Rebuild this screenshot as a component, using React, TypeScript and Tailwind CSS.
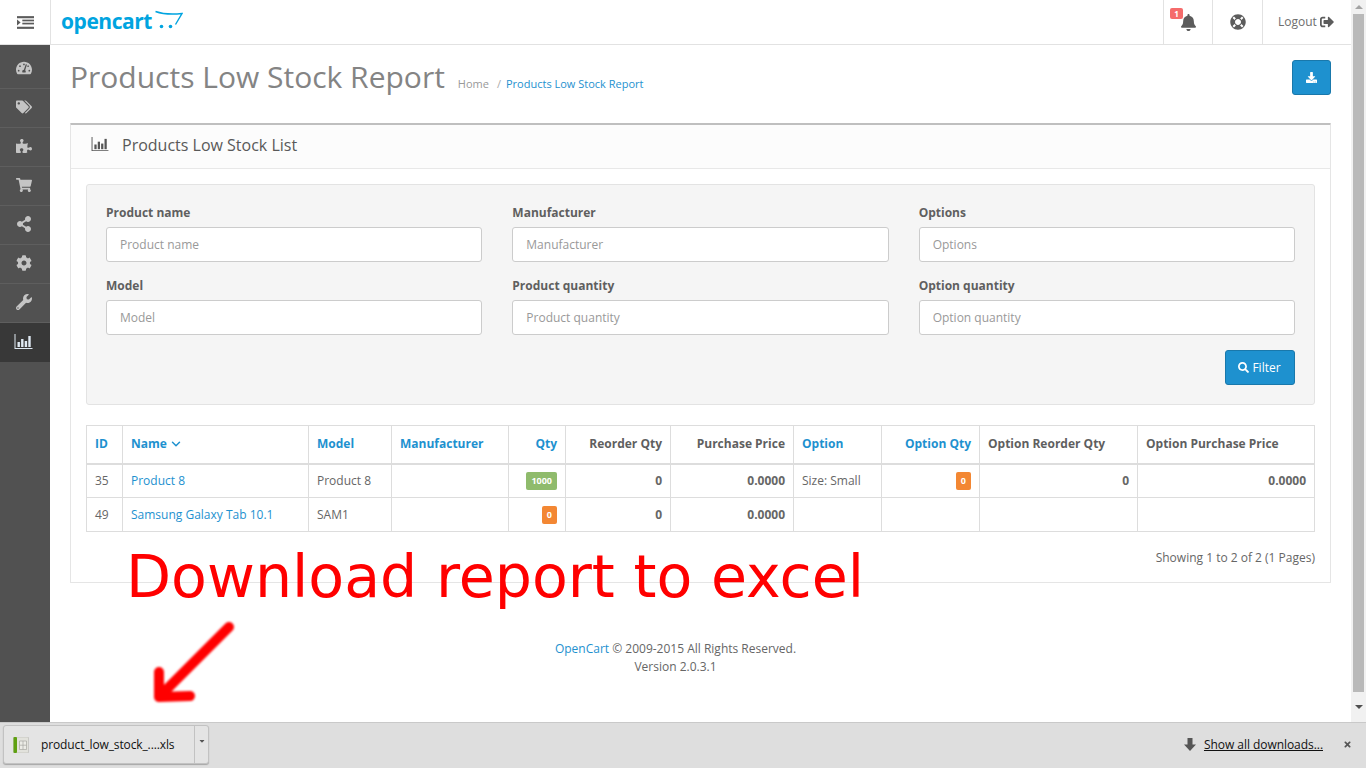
import { FaTachometerAlt, FaTags, FaPuzzlePiece, FaShoppingCart, FaShareAlt, FaCog, FaWrench, FaBell, FaLifeRing, FaSignOutAlt, FaDownload, FaSearch, FaTimes, FaCaretDown } from "react-icons/fa"
import { ChevronDown } from "lucide-react"

function ChartIcon({ className }: { className?: string }) {
    return (
        <svg viewBox="0 0 18 16" className={className} fill="currentColor">
            <path d="M0 0h1v14h17v1H0z" />
            <rect x="3" y="8" width="2.4" height="5" />
            <rect x="6.6" y="5" width="2.4" height="8" />
            <rect x="10.2" y="7" width="2.4" height="6" />
            <rect x="13.8" y="2" width="2.4" height="11" />
        </svg>
    )
}

const navIcons = [FaTachometerAlt, FaTags, FaPuzzlePiece, FaShoppingCart, FaShareAlt, FaCog, FaWrench]

function Field({ label }: { label: string }) {
    return (
        <div>
            <label className="block text-[12px] font-bold text-[#5f5f5f] leading-[17px] mb-[6px]">{label}</label>
            <input placeholder={label} className="block w-full h-[35px] px-[13px] bg-white border border-[#cccccc] rounded-[3px] text-[12px] placeholder:text-[#999999]" />
        </div>
    )
}

const th = "border border-[#dddddd] border-b-2 px-2 text-[12px] font-bold h-[38px]"
const td = "border border-[#dddddd] px-2 text-[12px]"

function Badge({ color, children }: { color: string; children: string }) {
    return <span className={`inline-flex items-center justify-center h-[18px] px-[5px] rounded-[2px] text-white text-[9px] font-bold ${color}`}>{children}</span>
}

export default function App() {
    return (
        <div className="h-[768px] w-[1366px] overflow-hidden flex flex-col font-['Open_Sans',sans-serif] text-[#666666] relative">
            <div className="flex flex-1 min-h-0">
                <div className="flex-1 flex flex-col min-w-0">
                    {/* top bar */}
                    <div className="h-[45px] flex border-b border-[#e2e2e2] bg-white shrink-0">
                        <div className="w-[51px] border-r border-[#e2e2e2] flex items-center justify-center">
                            <svg viewBox="0 0 16 12" className="w-[17px] h-[13px] text-[#5c5c5c]" fill="currentColor">
                                <rect width="16" height="2" />
                                <rect x="5" y="3.3" width="11" height="1.6" />
                                <rect x="5" y="6.2" width="11" height="1.6" />
                                <rect y="10" width="16" height="2" />
                                <path d="M0 3.2 3.4 6 0 8.8z" />
                            </svg>
                        </div>
                        <div className="flex items-start pl-[10px]">
                            <span className="text-[#00a4e0] text-[21px] font-bold leading-[42px] tracking-[-0.45px]">opencart</span>
                            <svg viewBox="0 0 28 20" className="w-[28px] h-[20px] mt-[10px] ml-[3px]" fill="none">
                                <path d="M0.5 1.5C9 4.5 18 4.5 27 3.5 L20.5 14.5" stroke="#00a4e0" strokeWidth="1.4" />
                                <circle cx="6.500" cy="16.500" r="1.8" fill="#00a4e0" />
                                <circle cx="15.500" cy="16.500" r="1.8" fill="#00a4e0" />
                            </svg>
                        </div>
                        <div className="ml-auto flex">
                            <div className="w-[49px] border-l border-[#e2e2e2] flex items-center justify-center relative">
                                <FaBell className="text-[17px] text-[#5c5c5c] ml-[1px] mt-[1px]" />
                                <span className="absolute left-[6px] top-[8px] w-[13px] h-[11px] rounded-[2px] bg-[#f56b6b] text-white text-[8px] font-bold flex items-center justify-center leading-none">1</span>
                            </div>
                            <div className="w-[50px] border-l border-[#e2e2e2] flex items-center justify-center">
                                <FaLifeRing className="text-[16px] text-[#5c5c5c]" />
                            </div>
                            <div className="w-[89px] border-l border-[#e2e2e2] flex items-center pl-[15px] text-[12px] text-[#6e6e6e] gap-[3px]">
                                Logout <FaSignOutAlt className="text-[14px] text-[#5c5c5c]" />
                            </div>
                        </div>
                    </div>
                    <div className="flex flex-1 min-h-0">
                        {/* sidebar */}
                        <div className="w-[50px] bg-[#515151] shrink-0">
                            {navIcons.map((Icon, i) => (
                                <div key={i} className={`border-b border-[#5e5e5e] flex items-center justify-center pr-[3px] ${i === 0 ? "h-[44px] pt-[3px]" : "h-[39px] pb-[2px]"}`}>
                                    <Icon className="text-[16px] text-[#c4c4c4]" />
                                </div>
                            ))}
                            <div className="h-[39px] bg-[#383838] flex items-center justify-center pr-[3px] pb-[2px]">
                                <ChartIcon className="w-[19px] h-[16px] text-[#dfe9f2]" />
                            </div>
                        </div>
                        {/* content */}
                        <div className="flex-1 min-w-0 bg-white">
                            <div className="flex items-start pl-[20px] pr-[20px] pt-[14px] h-[78px]">
                                <h1 className="text-[30px] leading-[36px] font-normal text-[#848484]">Products Low Stock Report</h1>
                                <div className="flex text-[11px] ml-[13px] mt-[17px] leading-[16px]">
                                    <span className="text-[#999999]">Home</span>
                                    <span className="text-[#aaaaaa] ml-[8px] mr-[5px]">/</span>
                                    <span className="text-[#1e91cf]">Products Low Stock Report</span>
                                </div>
                                <button className="ml-auto mt-[1px] w-[39px] h-[35px] bg-[#1e91cf] border border-[#1978ab] rounded-[3px] flex items-center justify-center">
                                    <FaDownload className="text-[11px] text-white" />
                                </button>
                            </div>
                            <div className="mx-[20px] border border-[#e5e5e5] border-t-2 border-t-[#bfbfbf] rounded-[1px] h-[460px]">
                                <div className="h-[44px] bg-[#fcfcfc] border-b border-[#e8e8e8] flex items-center pl-[20px] pb-[4px]">
                                    <ChartIcon className="w-[18px] h-[15px] text-[#555555]" />
                                    <span className="text-[16px] ml-[13px] text-[#595959]">Products Low Stock List</span>
                                </div>
                                <div className="px-[15px] pt-[15px]">
                                    <div className="bg-[#f5f5f5] border border-[#e3e3e3] rounded-[3px] h-[221px] pl-[19px] pr-[19px] pt-[19px]">
                                        <div className="grid grid-cols-3 gap-x-[30px] gap-y-[15px]">
                                            <Field label="Product name" />
                                            <Field label="Manufacturer" />
                                            <Field label="Options" />
                                            <Field label="Model" />
                                            <Field label="Product quantity" />
                                            <Field label="Option quantity" />
                                        </div>
                                        <div className="flex justify-end mt-[15px]">
                                            <button className="w-[70px] h-[35px] bg-[#1e91cf] border border-[#1978ab] rounded-[3px] text-white text-[12px] flex items-center justify-center gap-[3px] pr-[1px]">
                                                <FaSearch className="text-[11px]" /> Filter
                                            </button>
                                        </div>
                                    </div>
                                    <table className="mt-[20px] w-full table-fixed border-collapse">
                                        <colgroup>
                                            <col className="w-[36px]" />
                                            <col className="w-[186px]" />
                                            <col className="w-[83px]" />
                                            <col className="w-[117px]" />
                                            <col className="w-[57px]" />
                                            <col className="w-[105px]" />
                                            <col className="w-[123px]" />
                                            <col className="w-[88px]" />
                                            <col className="w-[98px]" />
                                            <col className="w-[158px]" />
                                            <col />
                                        </colgroup>
                                        <thead>
                                            <tr>
                                                <th className={`${th} text-left text-[#1e91cf]`}>ID</th>
                                                <th className={`${th} text-left text-[#1e91cf]`}>
                                                    <span className="inline-flex items-center gap-[2px]">Name <ChevronDown className="w-[14px] h-[14px]" strokeWidth={2.5} /></span>
                                                </th>
                                                <th className={`${th} text-left text-[#1e91cf]`}>Model</th>
                                                <th className={`${th} text-left text-[#1e91cf]`}>Manufacturer</th>
                                                <th className={`${th} text-right text-[#1e91cf]`}>Qty</th>
                                                <th className={`${th} text-right text-[#5f5f5f]`}>Reorder Qty</th>
                                                <th className={`${th} text-right text-[#5f5f5f]`}>Purchase Price</th>
                                                <th className={`${th} text-left text-[#1e91cf]`}>Option</th>
                                                <th className={`${th} text-right text-[#1e91cf]`}>Option Qty</th>
                                                <th className={`${th} text-left text-[#5f5f5f]`}>Option Reorder Qty</th>
                                                <th className={`${th} text-left text-[#5f5f5f]`}>Option Purchase Price</th>
                                            </tr>
                                        </thead>
                                        <tbody>
                                            <tr className="h-[34px]">
                                                <td className={td}>35</td>
                                                <td className={`${td} text-[#1e91cf]`}>Product 8</td>
                                                <td className={td}>Product 8</td>
                                                <td className={td}></td>
                                                <td className={`${td} text-right`}><Badge color="bg-[#8fbb6c]">1000</Badge></td>
                                                <td className={`${td} text-right font-bold`}>0</td>
                                                <td className={`${td} text-right font-bold`}>0.0000</td>
                                                <td className={td}>Size: Small</td>
                                                <td className={`${td} text-right`}><Badge color="bg-[#f38733]">0</Badge></td>
                                                <td className={`${td} text-right font-bold`}>0</td>
                                                <td className={`${td} text-right font-bold`}>0.0000</td>
                                            </tr>
                                            <tr className="h-[34px]">
                                                <td className={td}>49</td>
                                                <td className={`${td} text-[#1e91cf]`}>Samsung Galaxy Tab 10.1</td>
                                                <td className={td}>SAM1</td>
                                                <td className={td}></td>
                                                <td className={`${td} text-right`}><Badge color="bg-[#f38733]">0</Badge></td>
                                                <td className={`${td} text-right font-bold`}>0</td>
                                                <td className={`${td} text-right font-bold`}>0.0000</td>
                                                <td className={td}></td>
                                                <td className={td}></td>
                                                <td className={td}></td>
                                                <td className={td}></td>
                                            </tr>
                                        </tbody>
                                    </table>
                                    <div className="text-right text-[12px] mt-[17px] text-[#666666]">Showing 1 to 2 of 2 (1 Pages)</div>
                                </div>
                            </div>
                            <div className="pr-[50px] mt-[57px] text-center text-[12px] leading-[18px] text-[#666666]">
                                <div><span className="text-[#1e91cf]">OpenCart</span> © 2009-2015 All Rights Reserved.</div>
                                <div>Version 2.0.3.1</div>
                            </div>
                        </div>
                    </div>
                </div>
                {/* page scrollbar */}
                <div className="w-[15px] bg-[#f1f1f1] shrink-0 flex flex-col items-center">
                    <div className="h-[14px] flex items-center justify-center">
                        <div className="w-0 h-0 border-x-[4px] border-x-transparent border-b-[4px] border-b-[#a3a3a3]" />
                    </div>
                    <div className="w-[11px] h-[678px] bg-[#b9b9b9]" />
                    <div className="flex-1 flex items-center justify-center">
                        <div className="w-0 h-0 border-x-[4px] border-x-transparent border-t-[4px] border-t-[#505050]" />
                    </div>
                </div>
            </div>
            {/* downloads bar */}
            <div className="h-[46px] shrink-0 bg-[#dedede] border-t border-[#c9c9c9] flex items-start pl-[3px] pr-[14px] text-[#111111]">
                <div className="mt-[2px] w-[206px] h-[39px] flex bg-[#e4e4e4] border border-[#c2c2c2] rounded-[3px] shadow-[0_1px_1px_rgba(0,0,0,0.25)]">
                    <div className="flex-1 flex items-center pl-[9px]">
                        <svg viewBox="0 0 16 16" className="w-[16px] h-[16px]">
                            <rect x="0.5" y="0" width="15" height="16" rx="1" fill="#e2e2dc" stroke="#b5b5b0" strokeWidth="0.6" />
                            <rect x="0.5" y="0" width="3.5" height="16" rx="1" fill="#5fa011" />
                            <path d="M6.500 4h7v8.500h-7zM6.500 8.200h7M10 4v8.500" fill="#ecece6" stroke="#a8a8a2" strokeWidth="0.7" />
                        </svg>
                        <span className="ml-[12px] text-[12px] tracking-[-0.12px]">product_low_stock_....xls</span>
                    </div>
                    <div className="w-[14px] border-l border-[#c2c2c2] flex justify-center pt-[11px]">
                        <FaCaretDown className="text-[8px] text-[#555555]" />
                    </div>
                </div>
                <div className="ml-auto flex items-center h-full pb-[2px]">
                    <svg viewBox="0 0 12 13" className="w-[12px] h-[13px] text-[#555555] mr-[1px]" fill="currentColor">
                        <path d="M3.5 0h5v6.5H12L6 13 0 6.500h3.500z" />
                    </svg>
                    <span className="ml-[7px] text-[12px] underline tracking-[-0.05px]">Show all downloads...</span>
                    <FaTimes className="ml-[20px] text-[9px] text-[#555555]" />
                </div>
            </div>
            {/* annotation drawn over the page */}
            <div className="absolute left-[126px] top-[540px] text-[58.6px] leading-[74px] text-[#ff0000] font-['DejaVu_Sans',sans-serif] whitespace-nowrap">Download report to excel</div>
            <svg className="absolute left-[145px] top-[615px] w-[95px] h-[95px]" viewBox="0 0 95 95" fill="none">
                <path d="M84 12 L14 82 M14 82 L14 57 M14 82 L45 81" stroke="#ff0000" strokeWidth="10" strokeLinecap="round" strokeLinejoin="round" style={{ filter: "blur(0.8px)" }} />
            </svg>
        </div>
    )
}
